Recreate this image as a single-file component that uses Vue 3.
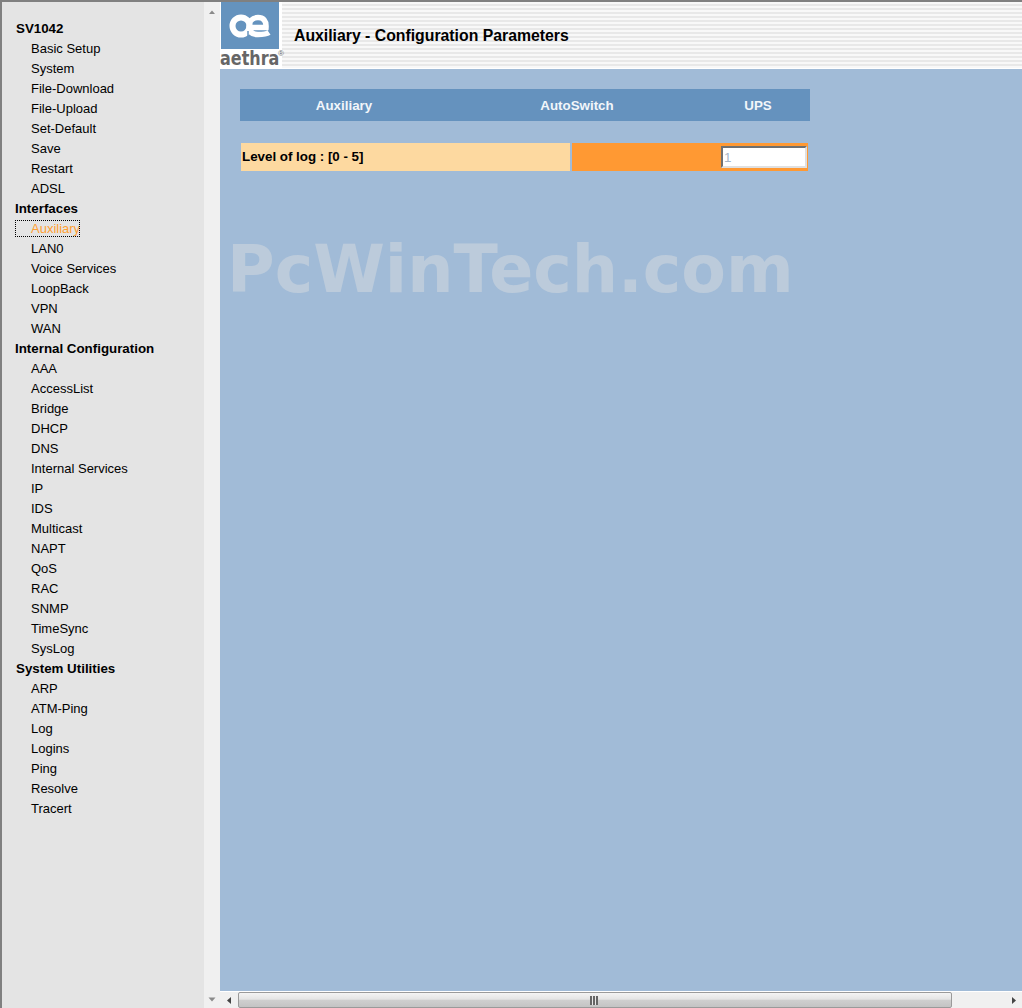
<template>
  <div class="window">
    <nav class="sidebar">
      <template v-for="group in menu" :key="group.title">
        <div class="group-title" :class="group.cls">{{ group.title }}</div>
        <div
          v-for="item in group.items"
          :key="item"
          class="item"
          :class="{ active: item === 'Auxiliary' }"
        ><span>{{ item }}</span></div>
      </template>
    </nav>

    <div class="vscroll">
      <svg width="16" height="16" viewBox="0 0 16 16"><path d="M5 12 L8 8.500 L11 12 Z" fill="#8a8a8a" /></svg>
      <svg width="16" height="16" viewBox="0 0 16 16"><path d="M4.500 5.500 L11.500 5.500 L8 9.500 Z" fill="#8a8a8a" /></svg>
    </div>

    <div class="right">
      <header class="head">
        <div class="logo">
          <div class="logo-box">
            <svg width="58" height="47" viewBox="0 0 58 47">
              <circle cx="20" cy="24" r="8.500" fill="none" stroke="#fff" stroke-width="6" />
              <path d="M28 25.500 L45 25.500 C45.500 18.500 42 15.500 37 15.500 C31 15.500 28 20 28 25 C28 31 32 32.500 37 32.500 C41 32.500 45 32.500 48 30.500" fill="none" stroke="#fff" stroke-width="5.500" />
              <path d="M27 29 L27 36" stroke="#6593be" stroke-width="1.500" />
            </svg>
          </div>
          <div class="logo-word">aethra</div>
          <span class="logo-reg">®</span>
        </div>
        <h1 class="page-title">Auxiliary - Configuration Parameters</h1>
      </header>

      <main class="content">
        <div class="tabs">
          <span>Auxiliary</span>
          <span>AutoSwitch</span>
          <span>UPS</span>
        </div>
        <div class="param-row">
          <div class="param-label">Level of log : [0 - 5]</div>
          <div class="param-value"><input class="param-input" value="1" disabled /></div>
        </div>
        <div class="watermark">PcWinTech.com</div>
      </main>

      <div class="hscroll">
        <svg width="18" height="17" viewBox="0 0 18 17"><path d="M11 5 L7 8.500 L11 12 Z" fill="#444" /></svg>
        <div class="thumb">
          <span class="grip"></span>
        </div>
        <svg width="18" height="17" viewBox="0 0 18 17"><path d="M8 5 L12 8.500 L8 12 Z" fill="#444" /></svg>
      </div>
    </div>
  </div>
</template>

<script setup>
const menu = [
  {
    title: 'SV1042',
    cls: 'indent-16',
    items: ['Basic Setup', 'System', 'File-Download', 'File-Upload', 'Set-Default', 'Save', 'Restart', 'ADSL'],
  },
  {
    title: 'Interfaces',
    items: ['Auxiliary', 'LAN0', 'Voice Services', 'LoopBack', 'VPN', 'WAN'],
  },
  {
    title: 'Internal Configuration',
    items: ['AAA', 'AccessList', 'Bridge', 'DHCP', 'DNS', 'Internal Services', 'IP', 'IDS', 'Multicast', 'NAPT', 'QoS', 'RAC', 'SNMP', 'TimeSync', 'SysLog'],
  },
  {
    title: 'System Utilities',
    cls: 'indent-16',
    items: ['ARP', 'ATM-Ping', 'Log', 'Logins', 'Ping', 'Resolve', 'Tracert'],
  },
]
</script>

<style>
html, body {
  margin: 0;
  overflow: hidden;
}
</style>

<style scoped>
.window {
  display: flex;
  width: 1022px;
  height: 1008px;
  box-sizing: border-box;
  border-top: 2px solid #808080;
  border-left: 2px solid #808080;
  font-family: "Liberation Sans", Arial, sans-serif;
  font-size: 13.33px;
  color: #000;
}
.sidebar {
  width: 202px;
  flex: none;
  background: #e4e4e4;
  padding-top: 17px;
  box-sizing: border-box;
}
.group-title {
  height: 20px;
  line-height: 20px;
  font-weight: bold;
  padding-left: 13px;
}
.group-title.indent-16 {
  padding-left: 14px;
}
.item {
  height: 20px;
  padding-left: 14px;
  padding-top: 2px;
  box-sizing: border-box;
  font-size: 13px;
}
.item span {
  display: block;
  width: fit-content;
  padding-left: 15px;
  height: 15px;
  line-height: 15px;
  white-space: nowrap;
}
.item.active span {
  color: #ffa033;
  outline: 1px dotted #000;
  width: 48px;
}
.vscroll {
  width: 16px;
  flex: none;
  background: #f0f0f0;
  display: flex;
  flex-direction: column;
  justify-content: space-between;
}
.vscroll svg {
  display: block;
}
.right {
  flex: 1;
  min-width: 0;
  display: flex;
  flex-direction: column;
}
.head {
  height: 67px;
  flex: none;
  box-sizing: border-box;
  display: flex;
  align-items: center;
  border-bottom: 1px solid #fff;
  background: repeating-linear-gradient(to bottom, #f8f8f8 0, #f8f8f8 2px, #e8e8e8 2px, #e8e8e8 4px);
}
.logo {
  position: relative;
  width: 62px;
  height: 66px;
  flex: none;
  background: #fff;
}
.logo-box {
  width: 58px;
  height: 47px;
  margin-left: 1px;
  background: #6593be;
}
.logo-box svg {
  display: block;
}
.logo-word {
  width: fit-content;
  font-family: "DejaVu Sans", sans-serif;
  font-weight: bold;
  font-size: 20px;
  line-height: 19px;
  color: #666;
  white-space: nowrap;
  transform: scaleX(0.8);
  transform-origin: left center;
}
.logo-reg {
  position: absolute;
  left: 58px;
  top: 48px;
  font-size: 8px;
  line-height: 8px;
  color: #666;
}
.page-title {
  margin: 0 0 0 12px;
  font-size: 15.8px;
  font-weight: bold;
  line-height: 20px;
  position: relative;
  top: 1px;
}
.content {
  flex: 1;
  position: relative;
  background: #a1bbd7;
  padding: 20px 0 0 20px;
}
.tabs {
  width: 570px;
  height: 32px;
  display: grid;
  grid-template-columns: 208px 258px 104px;
  align-items: center;
  justify-items: center;
  background: #6592be;
  color: #f2f6fa;
  font-weight: bold;
}
.param-row {
  width: 567px;
  height: 28px;
  margin: 22px 0 0 1px;
  display: flex;
  gap: 2px;
}
.param-label {
  width: 329px;
  background: #fdd9a0;
  line-height: 28px;
  padding-left: 1px;
  box-sizing: border-box;
  font-weight: bold;
}
.param-value {
  flex: 1;
  background: #ff9933;
  display: flex;
  justify-content: flex-end;
  align-items: center;
  padding-right: 1px;
}
.param-input {
  width: 86px;
  height: 22px;
  box-sizing: border-box;
  padding: 0 0 0 1px;
  border: 2px solid;
  border-color: #707070 #e0e0e0 #e0e0e0 #707070;
  background: #fff;
  color: #a5b5c8;
  font: 13.33px "Liberation Sans", Arial, sans-serif;
}
.watermark {
  position: absolute;
  left: 7px;
  top: 163px;
  font-family: "DejaVu Sans", sans-serif;
  font-weight: bold;
  font-size: 65px;
  line-height: 76px;
  color: #bccbdb;
  white-space: nowrap;
}
.hscroll {
  height: 17px;
  flex: none;
  display: flex;
  background: #f0f0f0;
  border-top: 1px solid #fff;
  box-sizing: border-box;
}
.hscroll svg {
  flex: none;
  display: block;
}
.thumb {
  width: 714px;
  flex: none;
  box-sizing: border-box;
  border: 1px solid #9a9a9a;
  border-radius: 2px;
  background: linear-gradient(to bottom, #f4f4f4, #e4e4e4 45%, #cfcfcf 50%, #c4c4c4);
  display: flex;
  align-items: center;
  justify-content: center;
}
.grip {
  width: 8px;
  height: 9px;
  margin-left: -2px;
  background: repeating-linear-gradient(to right, #666 0, #666 2px, #e8e8e8 2px, #e8e8e8 3px);
}
.hscroll svg:last-child {
  margin-left: auto;
}
</style>
